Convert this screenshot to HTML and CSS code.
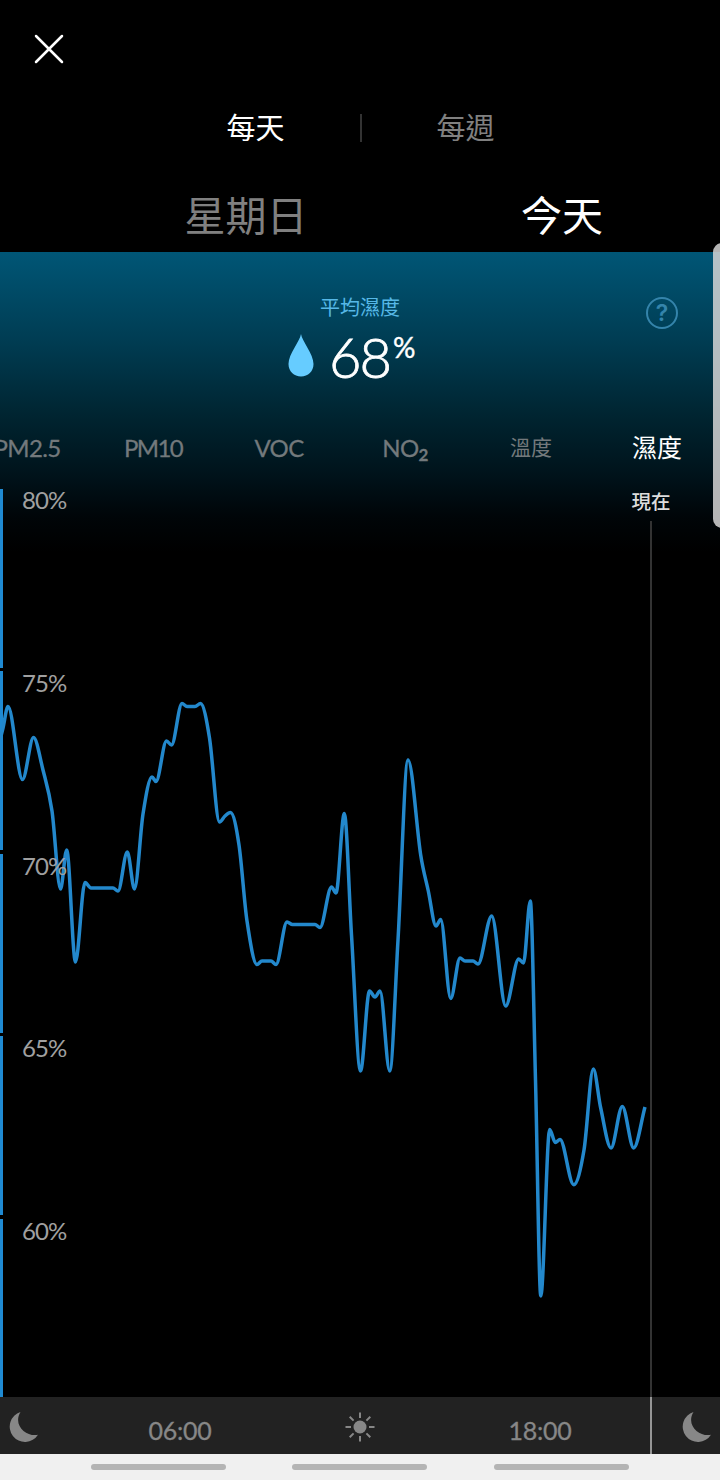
FILE: index.html
```html
<!DOCTYPE html>
<html lang="zh-Hant">
<head>
  <meta charset="UTF-8" />
  <meta name="viewport" content="width=device-width, initial-scale=1" />
  <title>濕度</title>
  <link rel="stylesheet" href="styles.css">
</head>
<body>
  <div class="screen">
    <header class="top-bar">
      <svg class="close" viewBox="0 0 30 30" role="button" aria-label="關閉">
        <path d="M2 2L28 28M28 2L2 28" />
      </svg>
    </header>

    <nav class="range-tabs">
      <span class="range active">每天</span>
      <span class="range">每週</span>
    </nav>

    <div class="days">
      <span class="day">星期日</span>
      <span class="day active">今天</span>
    </div>

    <main class="panel">
      <section class="summary">
        <p class="summary-label">平均濕度</p>
        <div class="summary-value">
          <svg class="drop" viewBox="0 0 26 43"><path d="M13 0C14 7 25.500 20 25.500 30C25.500 37.500 20 42.500 13 42.500C6 42.500 .5 37.500 .5 30C.5 20 12 7 13 0Z" /></svg>
          <span class="number">68</span><span class="unit">%</span>
        </div>
        <span class="help">?</span>
      </section>

      <nav class="metrics">
        <span>PM2.5</span>
        <span class="tight">PM10</span>
        <span>VOC</span>
        <span>NO<small>2</small></span>
        <span class="cjk">溫度</span>
        <span class="cjk active">濕度</span>
      </nav>

      <svg class="chart" viewBox="0 488 720 909">
        <g class="axis-bar">
          <rect x="0" y="489" width="3" height="179" />
          <rect x="0" y="671" width="3" height="179" />
          <rect x="0" y="854" width="3" height="179" />
          <rect x="0" y="1036" width="3" height="179" />
          <rect x="0" y="1219" width="3" height="178" />
        </g>
        <rect class="now-line" x="650" y="521" width="2" height="876" />
        <path id="line" class="line" />
        <g class="axis-text">
          <text x="22" y="508.500">80%</text>
          <text x="22" y="691.500">75%</text>
          <text x="22" y="874.500">70%</text>
          <text x="22" y="1057">65%</text>
          <text x="22" y="1239.500">60%</text>
        </g>
        <text class="now-text" x="651" y="509">現在</text>
      </svg>
    </main>

    <footer class="hours">
      <svg class="moon" viewBox="0 0 30 30"><path d="M11.500 0A15.300 15.300 0 1 0 29 22.700C19 25.500 3 14 11.500 0Z" /></svg>
      <span class="hour">06:00</span>
      <svg class="sun" viewBox="0 0 30 30">
        <circle cx="15" cy="15" r="6.500" />
        <path d="M15 .5V6M15 24V29.500M.5 15H6M24 15H29.500M4.700 4.700L8.600 8.600M21.400 21.400L25.300 25.300M4.700 25.300L8.600 21.400M21.400 8.600L25.300 4.700" />
      </svg>
      <span class="hour">18:00</span>
      <svg class="moon" viewBox="0 0 30 30"><path d="M11.500 0A15.300 15.300 0 1 0 29 22.700C19 25.500 3 14 11.500 0Z" /></svg>
      <span class="now-mark"></span>
    </footer>

    <div class="system-nav"><i></i><i></i><i></i></div>
    <div class="edge-handle"></div>
  </div>

  <script>
    const points = [
      [0, 740], [3, 728], [8, 706.5], [22.5, 779.5], [33.5, 737.5], [43, 770], [52, 811],
      [60.5, 889], [66.7, 850], [75.5, 962], [85, 882.5], [91, 888], [113, 888], [118, 891], [127.3, 852],
      [134.5, 889], [143, 814], [152, 777], [156, 781.5], [166.5, 741], [171.5, 745], [182, 703.5],
      [187, 706.5], [195, 706.5], [200.5, 703.5], [209.5, 738], [219.5, 822], [225, 816], [230.5, 812.5],
      [239, 845], [247, 921], [257, 964.5], [262, 961], [271, 961], [276, 964.5],
      [287, 922], [292.5, 924.5], [315, 924.5], [320, 927.5], [331.5, 887], [336, 893], [344.3, 813.5],
      [351.5, 935], [360.5, 1071], [369.5, 991], [375, 997], [380, 991], [389.7, 1071],
      [398, 940], [408, 760], [420.7, 855], [428.3, 891], [436, 926],
      [440.7, 919.5], [450.7, 998.5], [460, 958], [465, 961], [473, 961], [478, 964], [491.7, 916],
      [505.7, 1006], [518.7, 959], [523.5, 963], [530.3, 901], [535.5, 1080],
      [540.8, 1296], [549.7, 1129.5], [555.3, 1142.5], [560, 1139.5],
      [573.7, 1184.7], [584, 1150], [593.3, 1069], [600.7, 1108], [611, 1148], [622.3, 1106.5],
      [633.7, 1148], [645, 1107]
    ];

    const slope = (a, b) => (b[1] - a[1]) / (b[0] - a[0]);

    // flat tangent on peaks and valleys, neighbour slope everywhere else
    const tangents = points.map((p, i) => {
      if (i === 0) return slope(p, points[1]);
      if (i === points.length - 1) return slope(points[i - 1], p);
      const before = slope(points[i - 1], p);
      const after = slope(p, points[i + 1]);
      if (before * after <= 0) return 0;
      const limit = 3 * Math.min(Math.abs(before), Math.abs(after));
      const t = slope(points[i - 1], points[i + 1]);
      return Math.sign(t) * Math.min(Math.abs(t), limit);
    });

    let d = `M${points[0]}`;
    for (let i = 1; i < points.length; i++) {
      const [x0, y0] = points[i - 1];
      const [x1, y1] = points[i];
      const h = (x1 - x0) / 3;
      d += `C${x0 + h},${y0 + h * tangents[i - 1]} ${x1 - h},${y1 - h * tangents[i]} ${x1},${y1}`;
    }
    document.getElementById('line').setAttribute('d', d);
  </script>
</body>
</html>
```
FILE: styles.css
```css
:root {
  --line: #2388cc;
  --light-blue: #66ccff;
  --muted: #808080;
  --latin: Lato, "Noto Sans CJK TC", sans-serif;
  --cjk: "Noto Sans CJK TC", sans-serif;
}

* {
  margin: 0;
  padding: 0;
  box-sizing: border-box;
}

body {
  background: #000;
  color: #fff;
  font-family: var(--cjk);
}

.screen {
  position: relative;
  width: 720px;
  height: 1480px;
  overflow: hidden;
  display: flex;
  flex-direction: column;
}

.top-bar {
  height: 98px;
  padding: 34px;
}

.close {
  display: block;
  width: 30px;
  height: 30px;
  stroke: #fff;
  stroke-width: 2.5;
  stroke-linecap: round;
}

.range-tabs {
  height: 60px;
  display: flex;
  justify-content: center;
  align-items: center;
  font-size: 29px;
  color: var(--muted);
}

.range {
  width: 210px;
  height: 28px;
  text-align: center;
  line-height: 24px;
}

.range + .range {
  margin-left: -1px;
  border-left: 2px solid #333;
}

.active {
  color: #fff;
}

.days {
  height: 94px;
  display: grid;
  grid-template-columns: 316px 316px;
  padding-left: 88px;
  font-size: 41px;
  line-height: 111px;
  color: var(--muted);
  text-align: center;
}

.panel {
  height: 1145px;
  background: linear-gradient(#005676, #003c52 90px, #002430 165px, #00131b 222px, #000508 265px, #000 300px) no-repeat;
}

.summary {
  position: relative;
  height: 166px;
  padding-top: 40px;
  text-align: center;
}

.summary-label {
  font-size: 20px;
  line-height: 30px;
  color: var(--light-blue);
  opacity: 0.85;
}

.summary-value {
  display: flex;
  align-items: flex-start;
  padding: 12px 0 0 288px;
  font-family: var(--latin);
}

.drop {
  width: 26px;
  height: 43px;
  fill: var(--light-blue);
}

.number {
  margin-left: 15px;
  font-size: 56px;
  line-height: 45px;
  font-weight: 300;
  letter-spacing: -2px;
  -webkit-text-stroke: 0.8px #fff;
}

.unit {
  margin-left: 3px;
  font-size: 28px;
  line-height: 27px;
  -webkit-text-stroke: 0.4px #fff;
}

.help {
  position: absolute;
  left: 646px;
  top: 45px;
  width: 32px;
  height: 32px;
  border: 2px solid #3484ab;
  border-radius: 50%;
  font: 600 23px/28px Inter, sans-serif;
  color: #3484ab;
}

.metrics {
  height: 70px;
  margin-left: -36px;
  display: grid;
  grid-template-columns: repeat(6, 126px);
  font: 24px/60px var(--latin);
  letter-spacing: -0.6px;
  color: #73797c;
  text-align: center;
  -webkit-text-stroke: 0.3px;
}

.metrics .tight {
  letter-spacing: -1.6px;
}

.metrics small {
  position: relative;
  top: 4px;
  font-size: 17px;
  font-weight: bold;
}

.metrics .cjk {
  font-family: var(--cjk);
  font-size: 21px;
  line-height: 57px;
  letter-spacing: 0;
  -webkit-text-stroke: 0;
}

.metrics .cjk.active {
  font-size: 25px;
  color: #fff;
}

.chart {
  display: block;
  width: 720px;
  height: 909px;
  overflow: visible;
}

.axis-bar {
  fill: #1f8ad2;
}

.now-line {
  fill: #333;
}

.line {
  fill: none;
  stroke: var(--line);
  stroke-width: 3.5;
  stroke-linejoin: round;
}

.axis-text {
  font: 24px var(--latin);
  letter-spacing: -0.9px;
  fill: #a0a0a0;
}

.now-text {
  font: 500 19.5px var(--cjk);
  fill: #ddd;
  text-anchor: middle;
}

.hours {
  position: relative;
  flex: none;
  height: 57px;
  display: grid;
  grid-template-columns: repeat(5, 180px);
  width: 900px;
  margin-left: -90px;
  justify-items: center;
  align-items: center;
  background: #222;
  color: #878787;
}

.hour {
  font: 25px/30px var(--latin);
  letter-spacing: -0.3px;
  -webkit-text-stroke: 0.3px;
  padding-top: 9px;
}

.moon {
  width: 30px;
  height: 30px;
  fill: #878787;
  margin-top: 2px;
}

.moon:first-child {
  margin-left: 47px;
}

.moon:last-of-type {
  margin-left: -46px;
}

.sun {
  width: 30px;
  height: 30px;
  margin-top: 2px;
  fill: #878787;
  stroke: #878787;
  stroke-width: 2;
}

.sun circle {
  stroke: none;
}

.now-mark {
  position: absolute;
  left: 740px;
  width: 2px;
  height: 57px;
  background: #969696;
}

.system-nav {
  flex: none;
  height: 26px;
  display: flex;
  gap: 66.4px;
  padding: 10px 0 0 91px;
  background: #f0f0f0;
}

.system-nav i {
  width: 135px;
  height: 6px;
  border-radius: 3px;
  background: #b4b4b4;
}

.edge-handle {
  position: absolute;
  left: 713px;
  top: 243px;
  width: 20px;
  height: 285px;
  border-radius: 9px;
  background: rgba(213, 213, 213, 0.85);
}
```
